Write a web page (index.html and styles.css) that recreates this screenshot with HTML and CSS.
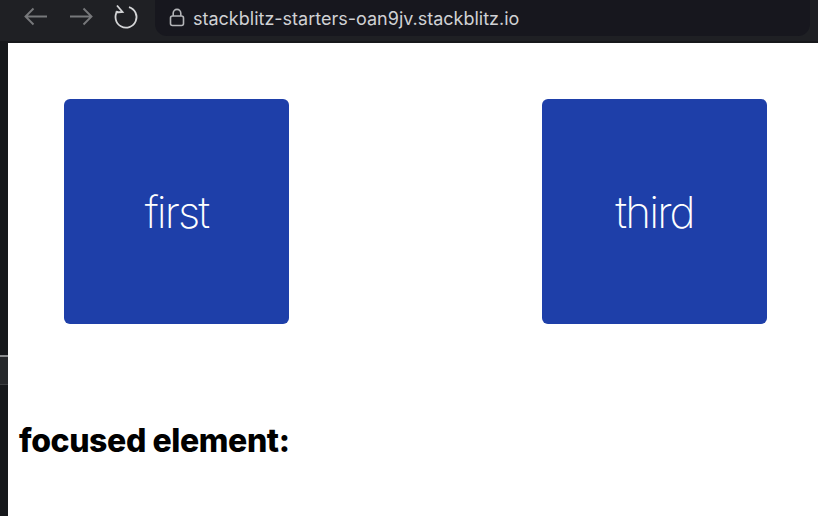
FILE: index.html
```html
<!DOCTYPE html>
<html lang="en">
<head>
    <meta charset="UTF-8">
    <title>stackblitz-starters-oan9jv.stackblitz.io</title>
    <link rel="stylesheet" href="styles.css">
</head>
<body>
    <header class="toolbar">
        <svg class="nav-icon" width="28" height="24" viewBox="0 0 28 24" fill="none" stroke="#77787b" stroke-width="1.9">
            <path d="M25 12.5H3.5M11.5 4.5L3.5 12.5L11.5 20.5"/>
        </svg>
        <svg class="nav-icon" width="28" height="24" viewBox="0 0 28 24" fill="none" stroke="#77787b" stroke-width="1.9">
            <path d="M3 12.5H24.5M16.5 4.5L24.5 12.5L16.5 20.5"/>
        </svg>
        <svg class="nav-icon reload" width="26" height="28" viewBox="0 0 26 28" fill="none" stroke="#d4d5d7" stroke-width="1.8">
            <path d="M16 4.1A10.5 10.5 0 1 1 4.5 8M4 2.5L9.5 9L2.5 9.5"/>
        </svg>
        <div class="address-bar">
            <svg class="lock" width="16" height="19" viewBox="0 0 16 19" fill="none" stroke="#b4b5b8" stroke-width="1.6">
                <rect x="1.5" y="8" width="13" height="9.5" rx="2"/>
                <path d="M4.2 8V5.2a3.8 3.8 0 0 1 7.6 0V8"/>
            </svg>
            <span>stackblitz-starters-oan9jv.stackblitz.io</span>
        </div>
    </header>
    <div class="content">
        <div class="side-strip">
            <div class="strip-mark"></div>
        </div>
        <main class="page">
            <div class="boxes">
                <div class="box">first</div>
                <div class="box">third</div>
            </div>
            <h2>focused element:</h2>
        </main>
    </div>
</body>
</html>
```

FILE: styles.css
```css
html, body {
    height: 100%;
}

body {
    margin: 0;
    display: flex;
    flex-direction: column;
    overflow: hidden;
    background: white;
    font-family: Inter, "Liberation Sans", sans-serif;
}

.toolbar {
    height: 43px;
    flex-shrink: 0;
    box-sizing: border-box;
    display: flex;
    align-items: flex-start;
    padding: 0 8px 0 22px;
    background: #1f2024;
    border-bottom: 2px solid #17181b;
}

.nav-icon {
    margin-top: 4px;
    margin-right: 17px;
    flex-shrink: 0;
}

.reload {
    margin-top: 3px;
    margin-left: 1px;
    margin-right: 16px;
}

.address-bar {
    flex: 1;
    height: 36px;
    display: flex;
    align-items: center;
    gap: 8px;
    padding-left: 14px;
    background: #17171e;
    border-radius: 0 0 12px 12px;
    color: #d0d1d4;
    font-size: 18px;
}

.lock {
    margin-top: -2px;
}

.content {
    flex: 1;
    display: flex;
}

.side-strip {
    width: 8px;
    flex-shrink: 0;
    padding-top: 312px;
    box-sizing: border-box;
    background: #16181b;
}

.strip-mark {
    height: 27px;
    border-top: 2px solid #8a8c8e;
    border-bottom: 1px solid #3c3e41;
    background: #26282b;
}

.page {
    flex: 1;
    padding-top: 56px;
    background: white;
}

.boxes {
    display: flex;
    justify-content: space-between;
    padding: 0 51px 0 56px;
}

.box {
    width: 225px;
    height: 225px;
    display: flex;
    align-items: center;
    justify-content: center;
    background: #1e3fa9;
    border-radius: 6px;
    color: white;
    font-size: 44px;
    font-weight: 200;
    letter-spacing: -1.9px;
}

h2 {
    margin: 99px 0 0 11px;
    font-size: 32px;
    font-weight: 800;
    line-height: 36px;
    letter-spacing: -0.4px;
    color: black;
}
```
